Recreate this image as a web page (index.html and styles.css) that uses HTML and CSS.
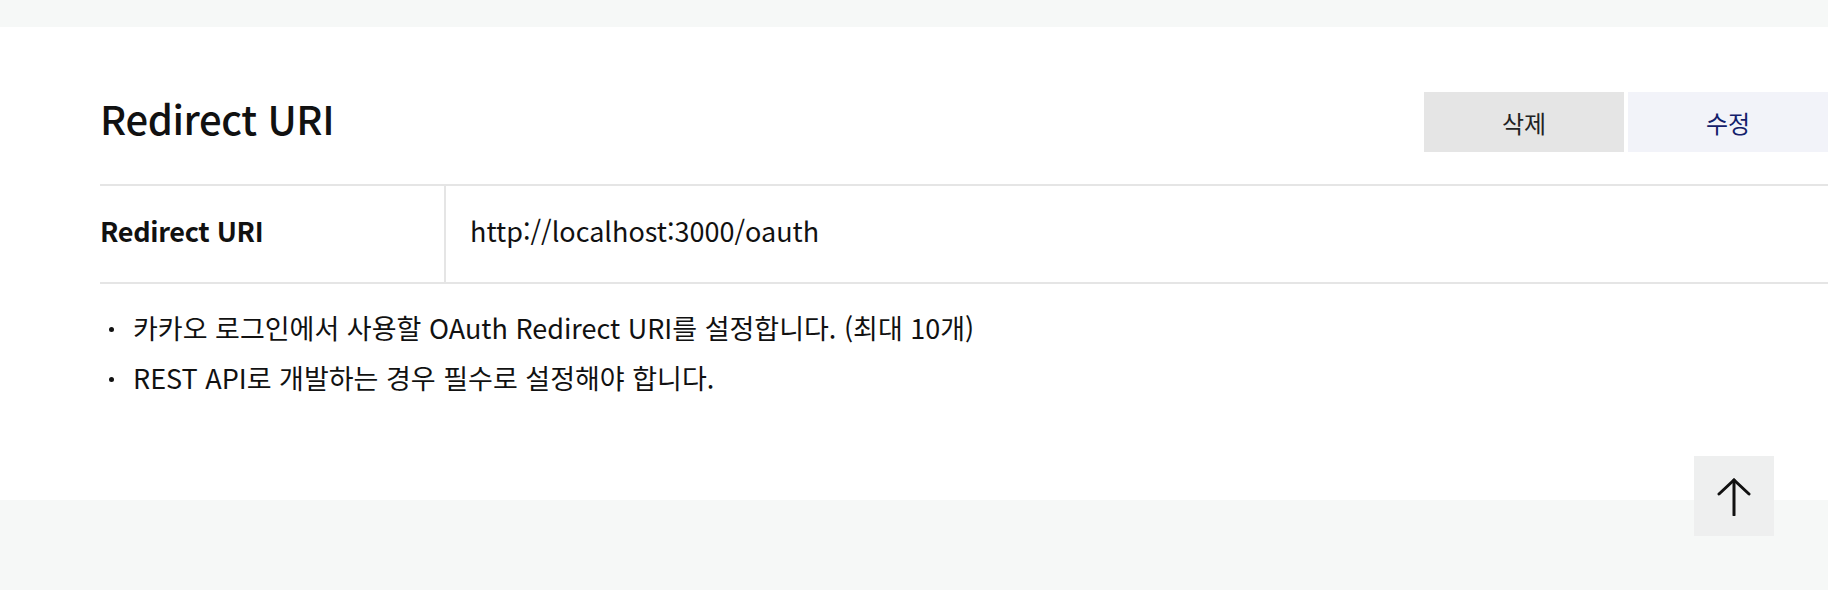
FILE: index.html
```html
<!DOCTYPE html>
<html lang="ko">
<head>
<meta charset="UTF-8">
<title>Redirect URI</title>
<link rel="stylesheet" href="styles.css">
</head>
<body>
<div class="top-band"></div>
<div class="section">
  <div class="section-head">
    <h2 class="section-title">Redirect URI</h2>
    <div class="head-buttons">
      <button class="btn btn-delete">삭제</button>
      <button class="btn btn-edit">수정</button>
    </div>
  </div>
  <div class="info-table">
    <div class="info-label">Redirect URI</div>
    <div class="info-value">http://localhost:3000/oauth</div>
  </div>
  <ul class="notes">
    <li>카카오 로그인에서 사용할 OAuth Redirect URI를 설정합니다. (최대 10개)</li>
    <li>REST API로 개발하는 경우 필수로 설정해야 합니다.</li>
  </ul>
</div>
<div class="bottom-band"></div>
<!-- 맨 위로 버튼 -->
<button class="to-top" aria-label="맨 위로">
  <svg width="34" height="40" viewBox="0 0 34 40" fill="none" stroke="#111" stroke-width="3" stroke-linecap="round">
    <path d="M17 4 L17 39"/>
    <path d="M2 18 L17 4 L32 18"/>
  </svg>
</button>
</body>
</html>
```

FILE: styles.css
```css
body {
  margin: 0;
  font-family: "Noto Sans CJK KR", "Noto Sans", sans-serif;
  color: #111;
  background: #fff;
}
.top-band {
  height: 27px;
  background-color: #f6f8f7;
}
.bottom-band {
  height: 90px;
  background-color: #f6f8f7;
}
.section {
  height: 473px;
  padding-left: 100px;
  box-sizing: border-box;
}
.section-head {
  display: flex;
  justify-content: space-between;
  align-items: center;
  padding-top: 65px;
  padding-bottom: 32px;
}
.section-title {
  margin: 0 0 8px;
  font-size: 40px;
  font-weight: 500;
  line-height: 52px;
  letter-spacing: -0.4px;
}
.head-buttons {
  display: flex;
  gap: 4px;
}
.btn {
  width: 200px;
  height: 60px;
  border: none;
  font-family: inherit;
  font-size: 24px;
  cursor: pointer;
}
.btn-delete {
  background-color: #e5e5e5;
  color: #222;
}
.btn-edit {
  background-color: #f2f3f9;
  color: #14206b;
}
.info-table {
  display: grid;
  grid-template-columns: 346px 1fr;
  border-top: 2px solid #e5e5e5;
  border-bottom: 2px solid #e5e5e5;
  height: 100px;
  box-sizing: border-box;
}
.info-label, .info-value {
  display: flex;
  align-items: center;
  font-size: 27px;
  padding-bottom: 7px;
}
.info-label {
  font-weight: 700;
  letter-spacing: -0.3px;
  border-right: 2px solid #e5e5e5;
}
.info-value {
  padding-left: 24px;
}
.notes {
  list-style: none;
  margin: 26px 0 0;
  padding: 0;
}
.notes li {
  position: relative;
  padding-left: 33px;
  font-size: 27px;
  line-height: 36px;
  margin-bottom: 14px;
}
.notes li::before {
  content: "";
  position: absolute;
  left: 9px;
  top: 17px;
  width: 5px;
  height: 5px;
  border-radius: 50%;
  background-color: #111;
}
.to-top {
  position: absolute;
  left: 1694px;
  top: 456px;
  width: 80px;
  height: 80px;
  border: none;
  background-color: #eeefef;
  display: flex;
  align-items: center;
  justify-content: center;
  padding: 0;
  cursor: pointer;
}
```
